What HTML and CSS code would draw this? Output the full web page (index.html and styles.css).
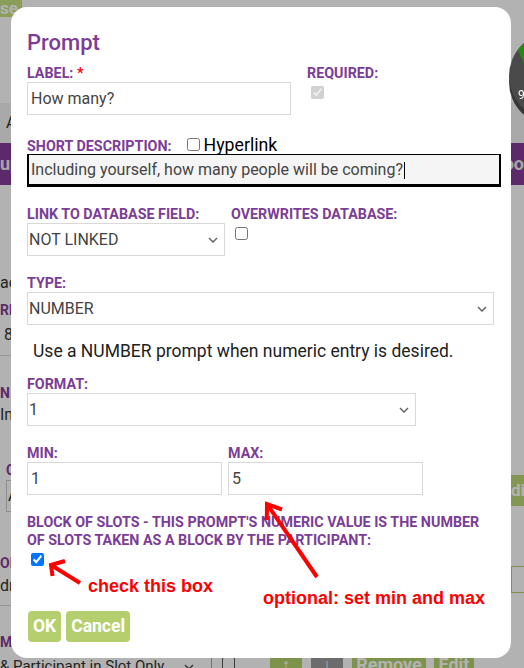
FILE: index.html
```html
<!DOCTYPE html>
<html lang="en">
<head>
<meta charset="utf-8">
<title>Prompt</title>
<link rel="stylesheet" href="styles.css">
</head>
<body>
<div class="page">
  <div class="bg-top"><span class="bg-close">se</span></div>
  <div class="bg-head">
    <div class="bg-tabs">A</div>
    <svg class="bg-chart" width="96" height="96" viewBox="0 0 96 96">
      <defs><clipPath id="pie"><circle cx="45" cy="44" r="44"/></clipPath></defs>
      <circle cx="45" cy="50" r="44" fill="#373737"/>
      <circle cx="45" cy="44" r="44" fill="#4a4a4a"/>
      <path d="M45 44 L20 40 L-1 -6 L45 -6 Z" fill="#278615" clip-path="url(#pie)"/>
      <text x="10" y="67" class="bg-chart-num">9</text>
    </svg>
  </div>
  <div class="bg-bar"><span>up</span><span>oo</span></div>
  <div class="bg-body">
    <div class="bg-left">
      <div class="bg-ad">ad</div>
      <div class="bg-lbl bg-rm">RM</div>
      <div class="bg-8">8</div>
      <div class="bg-hr bg-hr1"></div>
      <div class="bg-lbl bg-n">N</div>
      <div class="bg-im">Im</div>
      <div class="bg-lbl bg-c">C</div>
      <div class="bg-box">A</div>
      <div class="bg-lbl bg-on">ON</div>
      <div class="bg-dr">dr</div>
      <div class="bg-hr bg-hr2"></div>
      <div class="bg-lbl bg-m">M</div>
    </div>
    <div class="bg-right">
      <div class="bg-edit">dit</div>
      <div class="bg-outline"></div>
    </div>
  </div>
  <div class="bg-bottom">
    <span class="bg-opt">&amp; Participant in Slot Only<svg class="bg-chev" width="10" height="6" viewBox="0 0 10 6"><path d="M1 1 L5 5 L9 1" fill="none" stroke="#555" stroke-width="1.5"/></svg></span>
    <span class="bg-cb"></span>
    <span class="bg-btn bg-up">&#8593;</span>
    <span class="bg-btn bg-down">&#8595;</span>
    <span class="bg-btn bg-remove">Remove</span>
    <span class="bg-btn bg-editb">Edit</span>
  </div>
</div>

<div class="overlay">
  <div class="modal">
    <h2 class="title">Prompt</h2>

    <div class="row r1">
      <div class="fld w-label">
        <label class="lbl">LABEL: <span class="req">*</span></label>
        <input class="inp" type="text" value="How many?">
      </div>
      <div class="fld gap16">
        <label class="lbl">REQUIRED:</label>
        <input class="cb" type="checkbox" checked disabled>
      </div>
    </div>

    <div class="fld r2">
      <div class="lbl-line"><label class="lbl lbl-inline">SHORT DESCRIPTION:</label><input class="cb-inline" type="checkbox"><span class="hyper">Hyperlink</span></div>
      <div class="inp desc">Including yourself, how many people will be coming?<span class="caret"></span></div>
    </div>

    <div class="row r3">
      <div class="fld w-link">
        <label class="lbl">LINK TO DATABASE FIELD:</label>
        <div class="sel">
          <select><option>NOT LINKED</option></select>
          <svg class="chev" width="10" height="6" viewBox="0 0 10 6"><path d="M1 1 L5 5 L9 1"/></svg>
        </div>
      </div>
      <div class="fld gap6">
        <label class="lbl">OVERWRITES DATABASE:</label>
        <input class="cb" type="checkbox">
      </div>
    </div>

    <div class="fld w-type">
      <label class="lbl">TYPE:</label>
      <div class="sel">
        <select><option>NUMBER</option></select>
        <svg class="chev" width="10" height="6" viewBox="0 0 10 6"><path d="M1 1 L5 5 L9 1"/></svg>
      </div>
    </div>

    <p class="hint">Use a NUMBER prompt when numeric entry is desired.</p>

    <div class="fld w-format r5">
      <label class="lbl">FORMAT:</label>
      <div class="sel">
        <select><option>1</option></select>
        <svg class="chev" width="10" height="6" viewBox="0 0 10 6"><path d="M1 1 L5 5 L9 1"/></svg>
      </div>
    </div>

    <div class="row r6">
      <div class="fld w-num">
        <label class="lbl">MIN:</label>
        <input class="inp" type="text" value="1">
      </div>
      <div class="fld w-num">
        <label class="lbl">MAX:</label>
        <input class="inp" type="text" value="5">
      </div>
    </div>

    <div class="fld r7">
      <label class="lbl lbl-wrap">BLOCK OF SLOTS - THIS PROMPT'S NUMERIC VALUE IS THE NUMBER<br>OF SLOTS TAKEN AS A BLOCK BY THE PARTICIPANT:</label>
      <input class="cb" type="checkbox" checked>
    </div>

    <div class="btns">
      <button class="btn" type="button">OK</button>
      <button class="btn" type="button">Cancel</button>
    </div>

    <svg class="notes" width="500" height="651" viewBox="0 0 500 651">
      <g fill="none" stroke="#ff0000" stroke-width="4" stroke-linejoin="miter">
        <path d="M69 576 L40 558"/>
        <path d="M54 554 L40 558 L41.5 569"/>
        <path d="M306 570 L256 497"/>
        <path d="M255.8 513 L256 497 L271 502.5"/>
      </g>
    </svg>
    <span class="note n1">check this box</span>
    <span class="note n2">optional: set min and max</span>
  </div>
</div>
</body>
</html>
```

FILE: styles.css
```css
* { box-sizing: border-box; }
html, body { margin: 0; padding: 0; }
body {
  width: 524px;
  height: 668px;
  overflow: hidden;
  background: #fff;
  color: #222;
  font-family: Roboto, "Noto Sans", Arial, sans-serif;
}
input, select, button { font-family: inherit; }

/* ---------- background page ---------- */
.page {
  width: 524px;
  height: 668px;
  display: flex;
  flex-direction: column;
  overflow: hidden;
}
.bg-top { flex: none; height: 17px; display: flex; }
.bg-close {
  background: #c6e282;
  color: #fff;
  font-weight: 700;
  font-size: 17px;
  line-height: 17px;
  padding: 0 4px 0 0;
}
.bg-head {
  flex: none;
  height: 126px;
  display: grid;
  grid-template-columns: 508px 96px;
  grid-template-rows: 15px 71px 40px;
}
.bg-tabs {
  grid-column: 1 / -1;
  grid-row: 3;
  background: #f2f2f2;
  color: #333;
  font-size: 16px;
  line-height: 40px;
  padding-left: 6px;
}
.bg-chart {
  grid-column: 2;
  grid-row: 2 / 4;
  align-self: start;
  display: block;
  z-index: 1;
}
.bg-chart-num { fill: #fff; font-size: 12px; font-family: Roboto, Arial, sans-serif; }
.bg-bar {
  flex: none;
  height: 42px;
  background: #853d99;
  color: #eee;
  font-weight: 700;
  font-size: 18px;
  line-height: 42px;
  display: flex;
  justify-content: space-between;
}
.bg-body {
  flex: none;
  height: 467px;
  display: flex;
  justify-content: space-between;
}
.bg-left {
  width: 60px;
  font-size: 16px;
  line-height: 16px;
  color: #333;
  display: flex;
  flex-direction: column;
  align-items: flex-start;
}
.bg-lbl { color: #853d99; font-weight: 700; font-size: 14px; }
.bg-ad { margin-top: 90px; }
.bg-rm { margin-top: 11px; }
.bg-8 { margin-top: 9px; padding-left: 4px; }
.bg-hr { height: 1px; width: 60px; background: #d6d6d6; }
.bg-hr1 { margin-top: 12px; }
.bg-n { margin-top: 29px; }
.bg-im { margin-top: 6px; }
.bg-c { margin-top: 39px; padding-left: 6px; }
.bg-box {
  margin-top: 2px;
  margin-left: 6px;
  width: 50px;
  height: 32px;
  border: 1px solid #ccc;
  line-height: 30px;
  padding-left: 1px;
}
.bg-on { margin-top: 43px; }
.bg-dr { margin-top: 7px; }
.bg-hr2 { margin-top: 11px; }
.bg-m { margin-top: 28px; }
.bg-right {
  width: 13px;
  overflow: hidden;
  display: flex;
  flex-direction: column;
}
.bg-edit {
  margin-top: 290px;
  height: 31px;
  background: #bcd975;
  color: #fff;
  font-weight: 700;
  font-size: 17px;
  line-height: 31px;
  white-space: nowrap;
}
.bg-outline {
  margin-top: 60px;
  height: 27px;
  width: 40px;
  border: 1px solid #b6d06f;
}
.bg-bottom {
  flex: none;
  height: 16px;
  display: flex;
  align-items: flex-start;
  font-size: 15px;
  line-height: 16px;
  color: #333;
  white-space: nowrap;
}
.bg-opt {
  width: 212px;
  height: 30px;
  border-right: 1px solid #aaa;
  display: flex;
  align-items: flex-start;
  padding-top: 6px;
}
.bg-chev { margin-left: 20px; margin-top: 6px; }
.bg-cb {
  margin-left: 10px;
  margin-top: 5px;
  width: 13px;
  height: 13px;
  border: 1px solid #555;
  border-radius: 2px;
}
.bg-btn {
  height: 30px;
  margin-top: -2px;
  color: #fff;
  font-weight: 700;
  font-size: 18px;
  line-height: 30px;
  text-align: center;
  background: #b3d16c;
}
.bg-up { margin-left: 35px; width: 32px; }
.bg-down { margin-left: 9px; width: 32px; background: #9b9b9b; }
.bg-remove { margin-left: 9px; width: 74px; }
.bg-editb { margin-left: 8px; width: 40px; }

/* ---------- modal ---------- */
.overlay {
  position: fixed;
  inset: 0;
  background: rgba(0, 0, 0, 0.3);
  padding: 7px 0 0 11px;
}
.modal {
  position: relative;
  width: 500px;
  background: #fff;
  border-radius: 16px;
  padding: 22px 16px 16px;
}
.title {
  margin: 0 0 9px;
  font-size: 22px;
  line-height: 27px;
  font-weight: 500;
  color: #7b3d96;
}
.lbl {
  display: block;
  font-size: 14.3px;
  line-height: 16px;
  font-weight: 700;
  color: #7b3d96;
  white-space: nowrap;
  margin-bottom: 1px;
}
.req { color: #f00; }
.row { display: flex; align-items: flex-start; }
.fld { display: flex; flex-direction: column; align-items: flex-start; }
.r1 { margin-bottom: 23px; }
.w-label { width: 264px; }
.gap16 { margin-left: 16px; }
.gap6 { margin-left: 6px; }
.inp {
  width: 100%;
  height: 33px;
  border: 1px solid #d9d9d9;
  background: #fff;
  padding: 0 3px;
  font-size: 16px;
  color: #444;
  outline: none;
}
.cb {
  display: block;
  width: 13px;
  height: 13px;
  margin: 4px 0 0 4px;
}

.r2 { margin-bottom: 19px; }
.lbl-line {
  display: block;
  height: 16px;
  line-height: 16px;
  white-space: nowrap;
}
.lbl-inline { display: inline-block; margin-bottom: 0; vertical-align: baseline; }
.cb-inline {
  display: inline-block;
  width: 13px;
  height: 13px;
  margin: 0 4px 0 15px;
  vertical-align: baseline;
}
.hyper {
  font-size: 17.7px;
  line-height: 14px;
  color: #000;
}
.desc {
  width: 474px;
  border-style: solid;
  border-color: #000;
  border-width: 1px 2px 3px 2px;
  background: #f5f5f5;
  line-height: 29px;
  padding: 0 2px;
  white-space: nowrap;
}
.caret {
  display: inline-block;
  width: 1px;
  height: 17px;
  background: #000;
  vertical-align: -4px;
  margin-left: 1px;
}

.r3 { margin-bottom: 19px; }
.w-link { width: 198px; }
.w-type { width: 467px; }
.w-format { width: 389px; }
.sel {
  width: 100%;
  display: grid;
}
.sel select {
  grid-area: 1 / 1;
  appearance: none;
  -webkit-appearance: none;
  width: 100%;
  height: 33px;
  border: 1px solid #d9d9d9;
  border-radius: 0;
  background: #fff;
  padding: 0 0 0 1px;
  font-size: 16px;
  color: #444;
  outline: none;
}
.chev {
  grid-area: 1 / 1;
  justify-self: end;
  align-self: center;
  margin-right: 7px;
  fill: none;
  stroke: #666;
  stroke-width: 1.5;
  pointer-events: none;
}

.hint {
  margin: 16px 0 15px;
  padding-left: 6px;
  font-size: 17.5px;
  line-height: 20px;
  color: #222;
}
.r5 { margin-bottom: 19px; }
.r6 { margin-bottom: 18px; gap: 6px; }
.w-num { width: 195px; }
.lbl-wrap {
  line-height: 18px;
  margin-bottom: 0;
}

.btns {
  display: flex;
  gap: 5px;
  margin: 45px 0 0 1px;
}
.btn {
  height: 31px;
  padding: 0 5px;
  border: 0;
  border-radius: 4px;
  background: #b5cf6e;
  color: #fff;
  font-size: 17.5px;
  font-weight: 700;
  line-height: 31px;
}

/* annotations drawn over the dialog */
.notes {
  position: absolute;
  left: 0;
  top: 0;
  pointer-events: none;
}
.note {
  position: absolute;
  color: #f00;
  font-family: "Liberation Sans", Arial, sans-serif;
  font-weight: 700;
  font-size: 18px;
  line-height: 20px;
  white-space: nowrap;
}
.n1 { left: 77px; top: 569px; }
.n2 { left: 252px; top: 581px; }
```
